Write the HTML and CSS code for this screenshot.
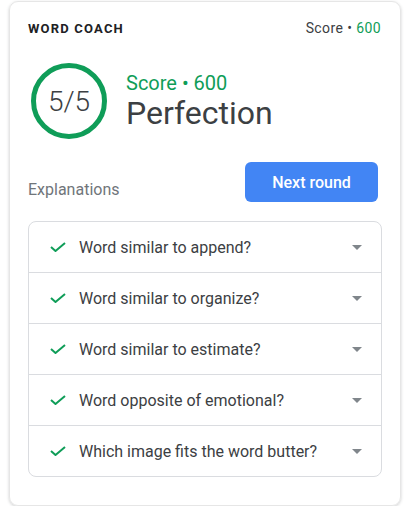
FILE: index.html
```html
<!DOCTYPE html>
<html lang="en">
<head>
    <meta charset="UTF-8">
    <meta name="viewport" content="width=device-width, initial-scale=1.0">
    <title>Word Coach</title>
    <link rel="stylesheet" href="styles.css">
</head>
<body>
    <div class="card">
        <div class="header">
            <span class="title">WORD COACH</span>
            <span class="score-small">Score • <span class="green">600</span></span>
        </div>

        <div class="summary">
            <div class="ring">5/5</div>
            <div class="result">
                <div class="result-score">Score • 600</div>
                <div class="result-label">Perfection</div>
            </div>
        </div>

        <div class="actions">
            <span class="explain">Explanations</span>
            <button class="next">Next round</button>
        </div>

        <div class="list">
            <div class="row">
                <svg class="check" viewBox="0 0 16 10"><polyline points="1,5 5.5,9 15,1"/></svg>
                <span class="question">Word similar to append?</span>
                <span class="caret"></span>
            </div>
            <div class="row">
                <svg class="check" viewBox="0 0 16 10"><polyline points="1,5 5.5,9 15,1"/></svg>
                <span class="question">Word similar to organize?</span>
                <span class="caret"></span>
            </div>
            <div class="row">
                <svg class="check" viewBox="0 0 16 10"><polyline points="1,5 5.5,9 15,1"/></svg>
                <span class="question">Word similar to estimate?</span>
                <span class="caret"></span>
            </div>
            <div class="row">
                <svg class="check" viewBox="0 0 16 10"><polyline points="1,5 5.5,9 15,1"/></svg>
                <span class="question">Word opposite of emotional?</span>
                <span class="caret"></span>
            </div>
            <div class="row">
                <svg class="check" viewBox="0 0 16 10"><polyline points="1,5 5.5,9 15,1"/></svg>
                <span class="question">Which image fits the word butter?</span>
                <span class="caret"></span>
            </div>
        </div>
    </div>
</body>
</html>
```

FILE: styles.css
```css
body {
    margin: 0;
    background: #fff;
    font-family: Roboto, 'Liberation Sans', Arial, sans-serif;
    color: #202124;
}
.card {
    margin: 1px 9px 0 9px;
    height: 505px;
    box-sizing: border-box;
    padding: 16px 18px 0 18px;
    border-radius: 9px;
    border: 1px solid #e6e6e6;
    box-shadow: 0 1px 3px rgba(60, 64, 67, 0.25);
}
.header {
    display: flex;
    justify-content: space-between;
    align-items: center;
    height: 20px;
    padding-right: 1px;
}
.title {
    font-size: 13px;
    font-weight: bold;
    letter-spacing: 1.2px;
    color: #202124;
}
.score-small {
    font-size: 14px;
    letter-spacing: 0.4px;
    color: #3c4043;
}
.green {
    color: #0f9d58;
}
.summary {
    display: flex;
    align-items: center;
    gap: 19px;
    margin-top: 25px;
}
.ring {
    width: 76px;
    height: 76px;
    box-sizing: border-box;
    border: 5px solid #0f9d58;
    border-radius: 50%;
    margin-left: 3px;
    display: flex;
    align-items: center;
    justify-content: center;
    font-size: 28px;
    font-weight: 300;
    color: #3c4043;
}
.result-score {
    font-size: 20px;
    line-height: 24px;
    color: #0f9d58;
}
.result-label {
    font-size: 32px;
    line-height: 36px;
    color: #3c4043;
}
.actions {
    display: flex;
    justify-content: space-between;
    align-items: flex-end;
    margin-top: 23px;
    padding-right: 4px;
}
.explain {
    font-size: 16px;
    line-height: 24px;
    color: #70757a;
}
.next {
    width: 133px;
    height: 40px;
    border: none;
    border-radius: 6px;
    background: #4285f4;
    color: #fff;
    font-family: inherit;
    font-size: 16px;
    font-weight: 500;
    cursor: pointer;
}
.list {
    margin-top: 19px;
    border: 1px solid #dadce0;
    border-radius: 8px;
}
.row {
    display: flex;
    align-items: center;
    height: 50px;
    padding: 0 19px 0 21px;
    border-bottom: 1px solid #dadce0;
}
.row:last-child {
    border-bottom: none;
}
.check {
    width: 16px;
    height: 10px;
    fill: none;
    stroke: #0f9d58;
    stroke-width: 2;
    margin-right: 13px;
}
.question {
    flex: 1;
    font-size: 16px;
    color: #3c4043;
}
.caret {
    width: 0;
    height: 0;
    border-left: 5px solid transparent;
    border-right: 5px solid transparent;
    border-top: 5px solid #80868b;
}
```
